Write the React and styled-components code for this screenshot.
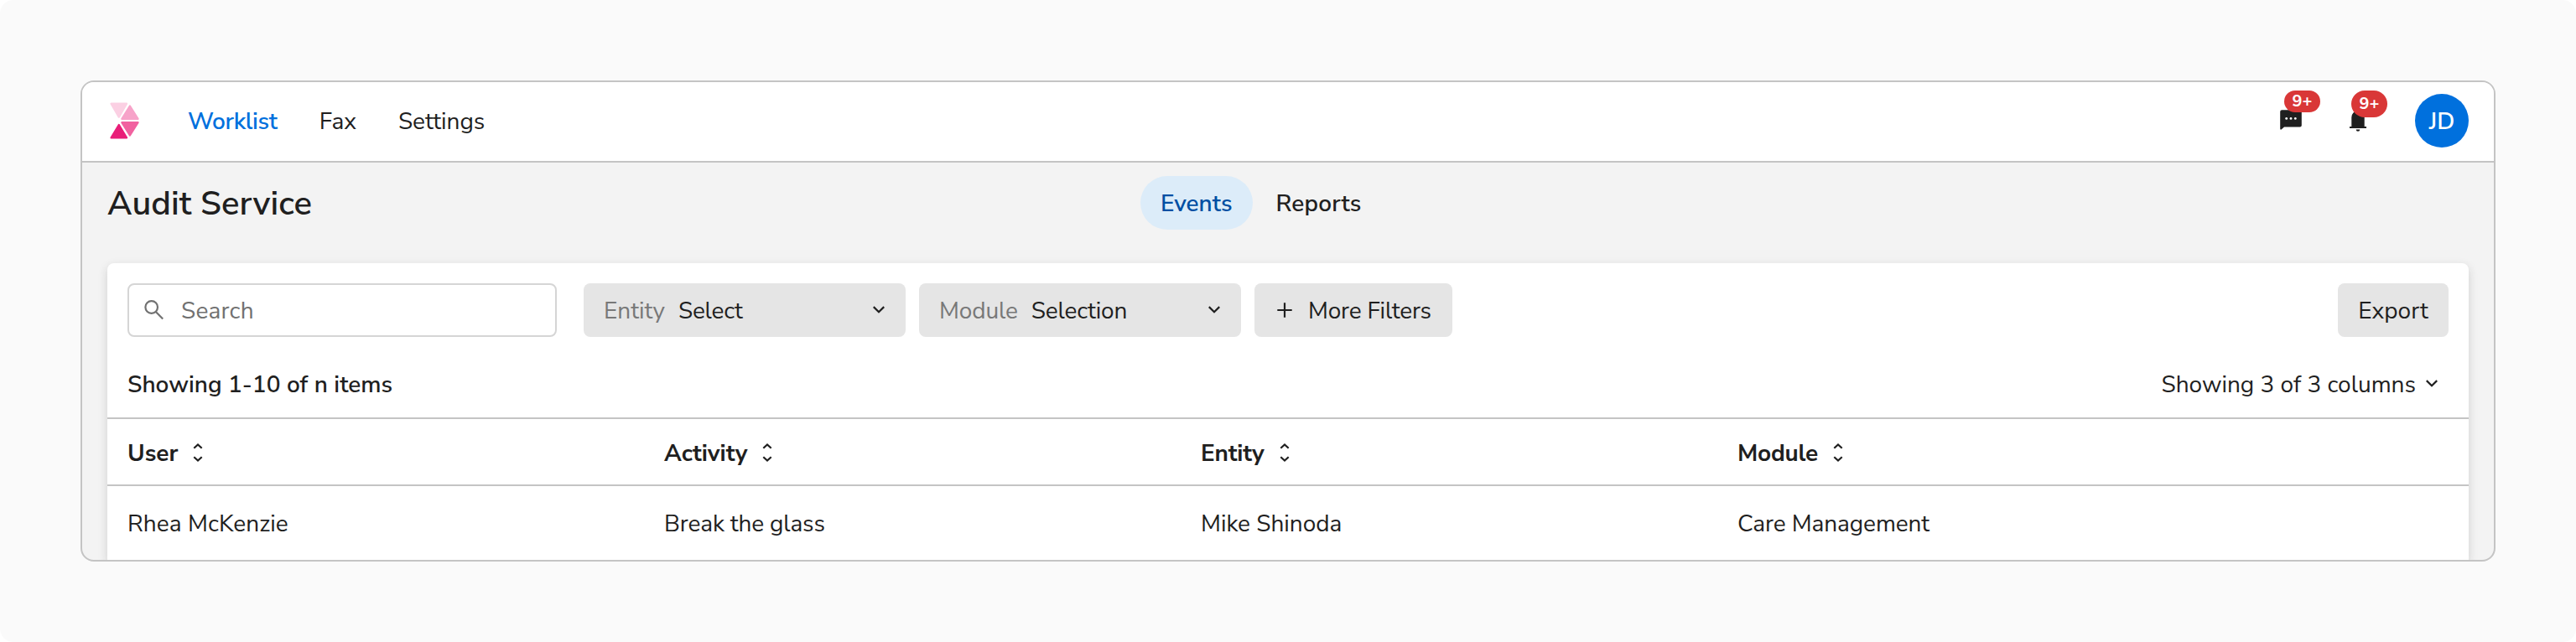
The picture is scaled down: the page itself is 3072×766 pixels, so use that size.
import React from 'react';
import styled, { createGlobalStyle } from 'styled-components';

const GlobalStyle = createGlobalStyle`
  * { box-sizing: border-box; }
  body {
    margin: 0;
    background: #fff;
    color: #1f1f1f;
    font-family: 'Nunito Sans', Nunito, 'Open Sans', 'Noto Sans', sans-serif;
    font-size: 28px;
    line-height: 40px;
  }
`;

const Canvas = styled.div`
  width: 3072px;
  height: 766px;
  padding: 96px;
  background: #fafafa;
  border-radius: 16px;
`;

const Window = styled.div`
  display: flex;
  flex-direction: column;
  height: 574px;
  overflow: hidden;
  border: 2px solid #c4c4c4;
  border-radius: 16px;
  background: #f3f3f3;
`;

const Text = styled.span`
  padding-top: 2px;
  white-space: nowrap;
  font-weight: ${(p) => p.$weight || 400};
  letter-spacing: ${(p) => p.$track || 0}px;
  color: ${(p) => p.$color || 'inherit'};
`;

const Icon = styled.svg`
  display: block;
  flex: none;
  width: 32px;
  height: 32px;
  fill: none;
  stroke: currentColor;
  stroke-width: 2.2;
`;

const Header = styled.header`
  display: flex;
  align-items: center;
  flex: none;
  height: 96px;
  padding: 14px 30px 16px;
  background: #fff;
  border-bottom: 2px solid #c4c4c4;
`;

const Logo = styled.svg`
  width: 40px;
  height: 48px;
  stroke-width: 2.4;
  stroke-linejoin: round;
`;

const Nav = styled.nav`
  display: flex;
  gap: 50px;
  margin-left: 56px;
`;

const HeaderActions = styled.div`
  display: flex;
  align-items: center;
  gap: 48px;
  margin-left: auto;
`;

const Notification = styled.div`
  position: relative;
  width: 32px;
  height: 32px;
`;

const Badge = styled.span`
  position: absolute;
  left: 8px;
  top: -20px;
  width: 43px;
  height: ${(p) => p.$height}px;
  line-height: ${(p) => p.$height}px;
  border-radius: 16px;
  background: #d93737;
  color: #fff;
  font-size: 20px;
  font-weight: 700;
  text-align: center;
`;

const Avatar = styled.div`
  display: flex;
  align-items: center;
  justify-content: center;
  width: 64px;
  height: 64px;
  margin-left: 4px;
  border-radius: 50%;
  background: #0070dd;
  color: #fff;
`;

const PageBar = styled.div`
  display: grid;
  grid-template-columns: 1232px auto 1fr;
  align-items: center;
  flex: none;
  height: 64px;
  margin: 16px 30px 40px;
`;

const Title = styled.h1`
  margin: 0;
  padding-top: 2px;
  font-size: 40px;
  line-height: 54px;
  font-weight: 560;
  letter-spacing: 0.05px;
`;

const Tabs = styled.div`
  display: flex;
  gap: 4px;
`;

const Tab = styled.div`
  display: flex;
  align-items: center;
  height: 64px;
  padding: 0 24px;
  border-radius: 32px;
  background: ${(p) => (p.$active ? '#dcecf9' : 'transparent')};
  color: ${(p) => (p.$active ? '#004fa3' : 'inherit')};
`;

const Card = styled.section`
  flex: 1;
  margin: 0 30px;
  background: #fff;
  border-radius: 8px 8px 0 0;
  box-shadow: 0 4px 12px rgba(33, 33, 33, 0.16);
`;

const Toolbar = styled.div`
  display: flex;
  gap: 16px;
  padding: 24px 24px 0;
`;

const SearchBox = styled.div`
  display: flex;
  align-items: center;
  gap: 16px;
  width: 512px;
  height: 64px;
  margin-right: 16px;
  padding-left: 14px;
  border: 2px solid #d5d5d5;
  border-radius: 8px;
  color: #717171;
`;

const Control = styled.div`
  display: flex;
  align-items: center;
  height: 64px;
  border-radius: 8px;
  background: #e5e5e5;
`;

const Select = styled(Control)`
  gap: 16px;
  width: 384px;
  padding: 0 16px 0 24px;

  ${Icon} { margin-left: auto; }
`;

const MoreButton = styled(Control)`
  gap: 12px;
  width: 236px;
  padding-left: 20px;
`;

const ExportButton = styled(Control)`
  justify-content: center;
  width: 132px;
  margin-left: auto;
`;

const Summary = styled.div`
  display: flex;
  align-items: center;
  justify-content: space-between;
  height: 98px;
  padding: 16px 28px 0 24px;
  border-bottom: 2px solid #c4c4c4;
`;

const ColumnPicker = styled.div`
  display: flex;
  align-items: center;
  gap: 3px;
`;

const Row = styled.div`
  display: grid;
  grid-template-columns: repeat(4, 640px);
  align-items: center;
  height: 88px;
  padding-left: 24px;
`;

const HeadRow = styled(Row)`
  height: 80px;
  padding-top: 2px;
  border-bottom: 2px solid #c4c4c4;
`;

const HeadCell = styled.div`
  display: flex;
  align-items: center;
  gap: 8px;
`;

const Chevron = () => (
  <Icon viewBox="0 0 32 32"><path d="M9.8 12.1 16 18.3 22.2 12.1" /></Icon>
);

const Sorter = () => (
  <Icon viewBox="0 0 32 32">
    <path d="M11.3 10.8 16 6.4 20.7 10.8M11.3 21.2 16 25.6 20.7 21.2" />
  </Icon>
);

const columns = [
  { name: 'User', value: 'Rhea McKenzie', track: 0.08 },
  { name: 'Activity', value: 'Break the glass', track: -0.15 },
  { name: 'Entity', nameTrack: -0.2, value: 'Mike Shinoda' },
  { name: 'Module', nameTrack: -0.25, value: 'Care Management', track: -0.1 },
];

export default function App() {
  return (
    <>
      <GlobalStyle />
      <Canvas>
        <Window>
          <Header>
            <Logo viewBox="0 0 40 48">
              <path d="M4.6 3.7H23L13.8 19.6Z" fill="#fbd0e3" stroke="#fbd0e3" />
              <path d="M26.9 6.6 36.5 21.8H17.4Z" fill="#f7a3c9" stroke="#f7a3c9" />
              <path d="M17.4 26.2H36.5L26.9 41.4Z" fill="#f162a0" stroke="#f162a0" />
              <path d="M13.8 29 23 44.3H4.6Z" fill="#e91e79" stroke="#e91e79" />
            </Logo>
            <Nav>
              <Text $weight={560} $color="#0070dd" $track={-0.3}>Worklist</Text>
              <Text>Fax</Text>
              <Text $track={-0.05}>Settings</Text>
            </Nav>
            <HeaderActions>
              <Notification>
                <Icon viewBox="0 0 32 32">
                  <path
                    d="M5.2 3.3H26.8a2 2 0 0 1 2 2V21.5a2 2 0 0 1-2 2H8L4.6 26.6Q3.2 27.2 3.2 25.6V5.3a2 2 0 0 1 2-2Z"
                    fill="#1f1f1f"
                    stroke="none"
                  />
                  <g fill="#fff" stroke="none">
                    <circle cx="10.7" cy="13.4" r="1.4" />
                    <circle cx="16" cy="13.4" r="1.4" />
                    <circle cx="21.3" cy="13.4" r="1.4" />
                  </g>
                </Icon>
                <Badge $height={26}>9+</Badge>
              </Notification>
              <Notification>
                <Icon viewBox="0 0 32 32">
                  <path
                    d="M8.3 23V12a7.7 7.7 0 0 1 15.4 0V23H26v2H6V23ZM13.7 26.4h4.6a2.3 2.3 0 0 1-4.6 0Z"
                    fill="#1f1f1f"
                    stroke="none"
                  />
                </Icon>
                <Badge $height={32}>9+</Badge>
              </Notification>
              <Avatar><Text $weight={560}>JD</Text></Avatar>
            </HeaderActions>
          </Header>

          <PageBar>
            <Title>Audit Service</Title>
            <Tabs>
              <Tab $active><Text $weight={560}>Events</Text></Tab>
              <Tab><Text $weight={560} $track={0.15}>Reports</Text></Tab>
            </Tabs>
          </PageBar>

          <Card>
            <Toolbar>
              <SearchBox>
                <Icon viewBox="0 0 32 32">
                  <circle cx="12.7" cy="12.5" r="7.3" />
                  <path d="M17.8 17.9 26.2 26.4" />
                </Icon>
                <Text $track={0.2}>Search</Text>
              </SearchBox>
              <Select>
                <Text $color="#787878">Entity</Text>
                <Text $track={-0.2}>Select</Text>
                <Chevron />
              </Select>
              <Select>
                <Text $color="#787878" $track={-0.15}>Module</Text>
                <Text $track={-0.15}>Selection</Text>
                <Chevron />
              </Select>
              <MoreButton>
                <Icon viewBox="0 0 32 32"><path d="M16 7.3V24.7M7.3 16H24.7" /></Icon>
                <Text $track={-0.2}>More Filters</Text>
              </MoreButton>
              <ExportButton><Text>Export</Text></ExportButton>
            </Toolbar>

            <Summary>
              <Text $weight={560} $track={0.03}>Showing 1-10 of n items</Text>
              <ColumnPicker>
                <Text>Showing 3 of 3 columns</Text>
                <Chevron />
              </ColumnPicker>
            </Summary>

            <HeadRow>
              {columns.map((c) => (
                <HeadCell key={c.name}>
                  <Text $weight={700} $track={c.nameTrack}>{c.name}</Text>
                  <Sorter />
                </HeadCell>
              ))}
            </HeadRow>
            <Row>
              {columns.map((c) => (
                <Text key={c.value} $track={c.track}>{c.value}</Text>
              ))}
            </Row>
          </Card>
        </Window>
      </Canvas>
    </>
  );
}
